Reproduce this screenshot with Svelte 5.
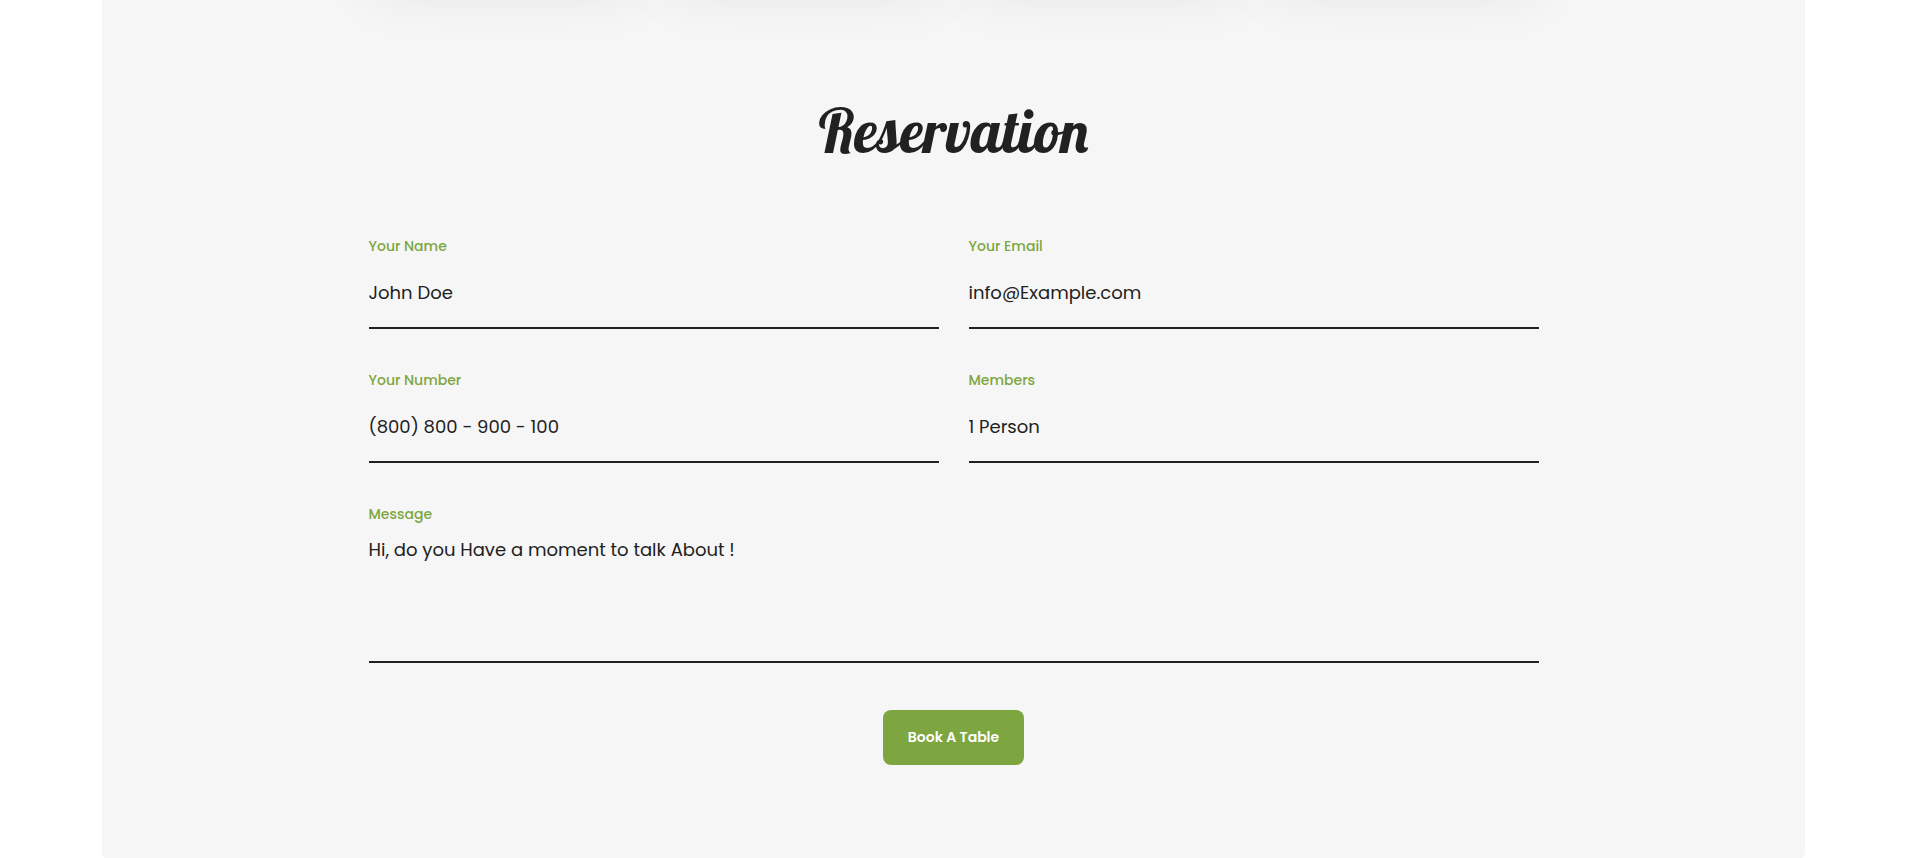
<script>
  const cards = [1, 2, 3, 4];

  let name = $state('John Doe');
  let email = $state('info@Example.com');
  let phone = $state('(800) 800 - 900 - 100');
  let members = $state('1 Person');
  let message = $state('Hi, do you Have a moment to talk About !');

  function handleSubmit(event) {
    event.preventDefault();
  }
</script>

<main>
  <div class="cards" aria-hidden="true">
    {#each cards as card (card)}
      <div class="card"></div>
    {/each}
  </div>

  <section class="reservation">
    <h2>Reservation</h2>

    <form onsubmit={handleSubmit}>
      <div class="field">
        <label for="name">Your Name</label>
        <input id="name" type="text" bind:value={name} />
      </div>
      <div class="field">
        <label for="email">Your Email</label>
        <input id="email" type="email" bind:value={email} />
      </div>
      <div class="field">
        <label for="phone">Your Number</label>
        <input id="phone" type="tel" bind:value={phone} />
      </div>
      <div class="field">
        <label for="members">Members</label>
        <select id="members" bind:value={members}>
          <option>1 Person</option>
          <option>2 Persons</option>
          <option>3 Persons</option>
          <option>4 Persons</option>
        </select>
      </div>
      <div class="field wide">
        <label for="message">Message</label>
        <textarea id="message" spellcheck="false" bind:value={message}></textarea>
      </div>
      <button type="submit">Book A Table</button>
    </form>
  </section>
</main>

<style>
  :global(body) {
    background-color: #ffffff;
  }

  main {
    margin: 0 114px 0 102px;
    background-color: #f6f6f6;
    border-radius: 0 0 8px 8px;
    overflow: hidden;
    color: #212121;
    font-family: Poppins, Roboto, sans-serif;
  }

  /* Only the shadow of the card row reaches into view */
  .cards {
    display: grid;
    grid-template-columns: repeat(4, 1fr);
    gap: 30px;
    max-width: 1170px;
    margin: -320px auto 0;
  }

  .card {
    height: 300px;
    border-radius: 20px;
    box-shadow: 0 12px 60px rgba(0, 0, 0, 0.08);
  }

  .reservation {
    max-width: 1170px;
    margin: 0 auto;
    padding: 107px 16px 95px;
  }

  h2 {
    margin: 0 0 59px;
    font-family: Lobster, 'Liberation Serif', serif;
    font-size: 60px;
    font-weight: 400;
    line-height: 88px;
    text-align: center;
  }

  form {
    display: grid;
    grid-template-columns: 1fr 1fr;
    column-gap: 30px;
    row-gap: 39px;
  }

  .field {
    display: flex;
    flex-direction: column;
  }

  .wide {
    grid-column: 1 / -1;
  }

  label {
    color: #7da640;
    font-size: 14px;
    font-weight: 500;
    line-height: 24px;
  }

  input,
  select,
  textarea {
    box-sizing: border-box;
    width: 100%;
    height: 71px;
    margin: 0;
    padding: 0;
    border: 0;
    border-bottom: 2px solid #212121;
    border-radius: 0;
    outline: 0;
    background: transparent;
    appearance: none;
    color: #212121;
    font-family: inherit;
    font-size: 18px;
    font-weight: 400;
  }

  textarea {
    height: 137px;
    padding-top: 12px;
    line-height: 24px;
    resize: none;
  }

  button {
    grid-column: 1 / -1;
    justify-self: center;
    margin-top: 8px;
    padding: 16px 25px;
    border: 0;
    border-radius: 8px;
    background-color: #7da640;
    color: #ffffff;
    font-family: inherit;
    font-size: 14px;
    font-weight: 600;
    line-height: 23px;
    cursor: pointer;
  }
</style>
